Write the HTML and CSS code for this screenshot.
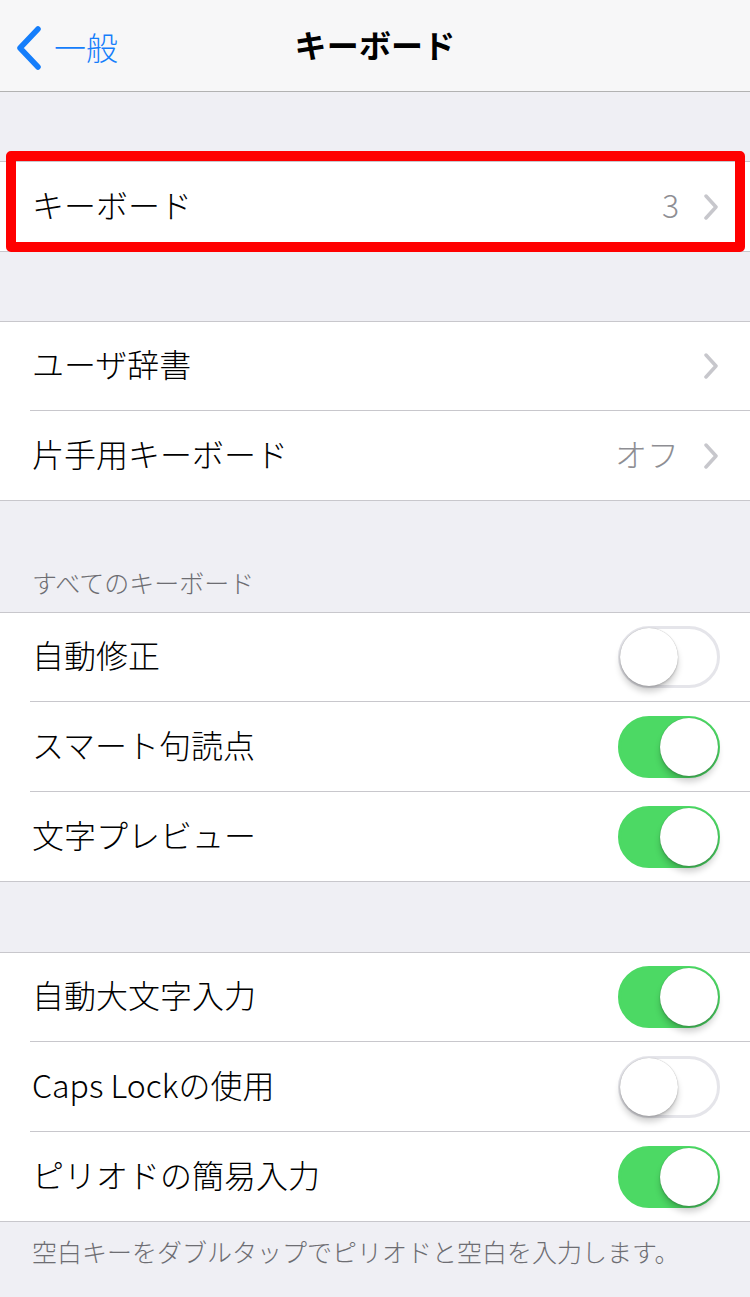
FILE: index.html
```html
<!DOCTYPE html>
<html lang="ja">
<head>
<meta charset="utf-8">
<title>キーボード</title>
<link rel="stylesheet" href="styles.css">
</head>
<body>
<header class="nav">
  <a class="nav-back" href="#">
    <svg class="nav-back-icon" viewBox="0 0 26 44" width="26" height="44" aria-hidden="true">
      <path d="M22 3 L4 22 L22 41" fill="none" stroke="#157efb" stroke-width="5.5" stroke-linecap="round" stroke-linejoin="round"/>
    </svg>
    <span>一般</span>
  </a>
  <h1 class="nav-title">キーボード</h1>
</header>

<main class="content">
  <section class="group group-first highlighted">
    <div class="row">
      <span class="label">キーボード</span>
      <span class="value">3</span>
      <svg class="chev" viewBox="0 0 16 26" width="16" height="26" aria-hidden="true"><path d="M3 2 L13 13 L3 24" fill="none" stroke="#c7c7cc" stroke-width="3.5" stroke-linecap="round" stroke-linejoin="round"/></svg>
    </div>
    <div class="annotation"></div>
  </section>

  <section class="group">
    <div class="row">
      <span class="label">ユーザ辞書</span>
      <svg class="chev" viewBox="0 0 16 26" width="16" height="26" aria-hidden="true"><path d="M3 2 L13 13 L3 24" fill="none" stroke="#c7c7cc" stroke-width="3.5" stroke-linecap="round" stroke-linejoin="round"/></svg>
    </div>
    <div class="row">
      <span class="label">片手用キーボード</span>
      <span class="value">オフ</span>
      <svg class="chev" viewBox="0 0 16 26" width="16" height="26" aria-hidden="true"><path d="M3 2 L13 13 L3 24" fill="none" stroke="#c7c7cc" stroke-width="3.5" stroke-linecap="round" stroke-linejoin="round"/></svg>
    </div>
  </section>

  <h2 class="section-header">すべてのキーボード</h2>
  <section class="group group-after-header">
    <div class="row">
      <span class="label">自動修正</span>
      <span class="toggle"><span class="knob"></span></span>
    </div>
    <div class="row">
      <span class="label">スマート句読点</span>
      <span class="toggle on"><span class="knob"></span></span>
    </div>
    <div class="row">
      <span class="label">文字プレビュー</span>
      <span class="toggle on"><span class="knob"></span></span>
    </div>
  </section>

  <section class="group group-last">
    <div class="row">
      <span class="label">自動大文字入力</span>
      <span class="toggle on"><span class="knob"></span></span>
    </div>
    <div class="row">
      <span class="label">Caps Lockの使用</span>
      <span class="toggle"><span class="knob"></span></span>
    </div>
    <div class="row">
      <span class="label">ピリオドの簡易入力</span>
      <span class="toggle on"><span class="knob"></span></span>
    </div>
  </section>
  <p class="section-footer">空白キーをダブルタップでピリオドと空白を入力します。</p>
</main>
</body>
</html>
```

FILE: styles.css
```css
* { box-sizing: border-box; }

html, body {
  margin: 0;
  padding: 0;
}

body {
  background: #efeff4;
  font-family: "Noto Sans CJK JP", sans-serif;
  color: #000;
  width: 750px;
  min-height: 1297px;
}

.nav {
  height: 92px;
  background: #f7f7f8;
  border-bottom: 1px solid #b2b2b2;
  display: flex;
  align-items: center;
  justify-content: center;
  position: relative;
}

.nav-back {
  position: absolute;
  left: 16px;
  top: 24px;
  display: flex;
  align-items: center;
  gap: 12px;
  color: #157efb;
  text-decoration: none;
  font-size: 32px;
  font-weight: 300;
  line-height: 44px;
}

.nav-back span { margin-bottom: 4px; }

.nav-back-icon { display: block; }

.nav-title {
  margin: 0 0 4px 0;
  font-size: 32px;
  font-weight: 700;
  letter-spacing: 0.2px;
}

.content {
  display: flex;
  flex-direction: column;
}

.group {
  background: #fff;
  border-top: 1px solid #c8c7cc;
  border-bottom: 1px solid #c8c7cc;
  margin-top: 69px;
  position: relative;
}

.group-after-header { margin-top: 0; }
.group-last { margin-top: 70px; }

.row {
  height: 88px;
  display: flex;
  align-items: center;
  padding: 0 31px 0 32px;
  position: relative;
}

.group-first .row { height: 89px; }

.row + .row {
  height: 90px;
  border-top: 1px solid #c8c7cc;
  margin-left: 30px;
  padding-left: 2px;
}

.label {
  flex: 1;
  font-size: 32px;
  font-weight: 300;
  line-height: 1;
  white-space: nowrap;
  margin-bottom: 6px;
}

.value {
  font-size: 32px;
  font-weight: 300;
  color: #8e8e93;
  margin-right: 24px;
  line-height: 1;
  margin-bottom: 6px;
}

.chev { display: block; }

.toggle {
  width: 102px;
  height: 62px;
  border-radius: 31px;
  border: 3px solid #e5e5ea;
  background: #fff;
  position: relative;
  margin-right: -1px;
}

.toggle .knob {
  position: absolute;
  top: -1px;
  left: -1px;
  width: 58px;
  height: 58px;
  border-radius: 50%;
  background: #fff;
  box-shadow: 0 6px 6px rgba(0,0,0,0.18), 0 0 1px rgba(0,0,0,0.35), 0 2px 2px rgba(0,0,0,0.1);
}

.toggle.on {
  background: #4cd964;
  border-color: #4cd964;
}

.toggle.on .knob {
  left: auto;
  right: -1px;
}

.section-header {
  margin: 69px 0 0 0;
  padding: 0 32px 16px;
  height: 42px;
  font-size: 25px;
  font-weight: 300;
  color: #6d6d72;
  line-height: 24px;
}

.section-footer {
  margin: 0;
  padding: 14px 32px;
  font-size: 25px;
  font-weight: 300;
  color: #6d6d72;
  line-height: 30px;
}

.annotation {
  position: absolute;
  top: -11px;
  left: 6px;
  right: 5px;
  bottom: -1px;
  border: 10px solid #ff0000;
  border-radius: 5px;
  pointer-events: none;
}
```
